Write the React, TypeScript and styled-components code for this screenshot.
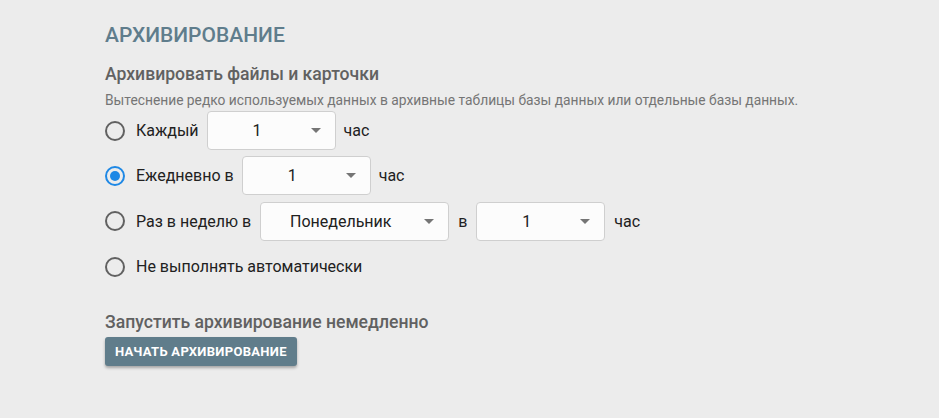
import React, { useState } from 'react'
import styled, { createGlobalStyle } from 'styled-components'

const GlobalStyle = createGlobalStyle`
    body {
        margin: 0;
        background: #ececec;
        font-family: Roboto, "Liberation Sans", sans-serif;
    }
`

const Page = styled.div`
    padding: 22px 0 0 105px;
    min-height: 418px;
    box-sizing: border-box;
`

const Title = styled.h1`
    margin: 0;
    font-size: 21px;
    font-weight: 500;
    line-height: 26px;
    color: #5f7d8c;
`

const SubTitle = styled.h2<{ top: number }>`
    margin: ${({ top }) => top}px 0 0;
    font-size: 17.6px;
    font-weight: 500;
    line-height: 22px;
    color: #616161;
`

const Description = styled.p`
    margin: 7px 0 2px;
    font-size: 13.8px;
    line-height: 17px;
    color: #757575;
`

const Options = styled.div`
    display: flex;
    flex-direction: column;
    gap: 6px;
`

const Row = styled.label<{ spacing?: number }>`
    display: flex;
    align-items: center;
    gap: ${({ spacing }) => spacing ?? 8}px;
    height: 39.3px;
    font-size: 16px;
    color: #212121;
    cursor: pointer;

    & > span:first-child {
        margin-right: ${({ spacing }) => 11 - (spacing ?? 8)}px;
    }
`

const Radio = styled.span<{ checked: boolean }>`
    width: 20px;
    height: 20px;
    box-sizing: border-box;
    border-radius: 50%;
    border: 2px solid ${({ checked }) => (checked ? '#1e88e5' : '#616161')};
    display: flex;
    align-items: center;
    justify-content: center;
    flex-shrink: 0;

    &::after {
        content: '';
        width: 10px;
        height: 10px;
        border-radius: 50%;
        background: ${({ checked }) => (checked ? '#1e88e5' : 'transparent')};
    }
`

const Select = styled.div<{ width: number }>`
    width: ${({ width }) => width}px;
    height: 39px;
    box-sizing: border-box;
    background: #fcfcfc;
    border: 1px solid #cfcfcf;
    border-radius: 4px;
    display: flex;
    align-items: center;
    padding-right: 14px;
    font-size: 16px;
    color: #212121;
`

const SelectValue = styled.span`
    flex: 1;
    text-align: center;
    margin-right: 4px;
`

const Arrow = styled.span`
    width: 0;
    height: 0;
    border-left: 5px solid transparent;
    border-right: 5px solid transparent;
    border-top: 5px solid #757575;
`

const Button = styled.button`
    margin-top: 4px;
    height: 29px;
    padding: 0 10px;
    border: none;
    border-radius: 3px;
    background: #607d8b;
    color: #fff;
    font-family: Roboto, "Liberation Sans", sans-serif;
    font-size: 13px;
    font-weight: 700;
    letter-spacing: 0.3px;
    box-shadow: 0 2px 3px rgba(0, 0, 0, 0.3);
    cursor: pointer;
`

const Dropdown = ({ value, width }: { value: string; width: number }) => (
    <Select width={width}>
        <SelectValue>{value}</SelectValue>
        <Arrow />
    </Select>
)

const App = () => {
    const [mode, setMode] = useState(1)

    return (
        <>
            <GlobalStyle />
            <Page>
                <Title>АРХИВИРОВАНИЕ</Title>
                <SubTitle top={15}>Архивировать файлы и карточки</SubTitle>
                <Description>
                    Вытеснение редко используемых данных в архивные таблицы базы данных или отдельные базы данных.
                </Description>
                <Options>
                    <Row onClick={() => setMode(0)}>
                        <Radio checked={mode === 0} />
                        Каждый
                        <Dropdown value="1" width={129} />
                        час
                    </Row>
                    <Row onClick={() => setMode(1)}>
                        <Radio checked={mode === 1} />
                        Ежедневно в
                        <Dropdown value="1" width={129} />
                        час
                    </Row>
                    <Row spacing={9} onClick={() => setMode(2)}>
                        <Radio checked={mode === 2} />
                        Раз в неделю в
                        <Dropdown value="Понедельник" width={189} />
                        в
                        <Dropdown value="1" width={129} />
                        час
                    </Row>
                    <Row onClick={() => setMode(3)}>
                        <Radio checked={mode === 3} />
                        Не выполнять автоматически
                    </Row>
                </Options>
                <SubTitle top={25}>Запустить архивирование немедленно</SubTitle>
                <Button>НАЧАТЬ АРХИВИРОВАНИЕ</Button>
            </Page>
        </>
    )
}

export default App
